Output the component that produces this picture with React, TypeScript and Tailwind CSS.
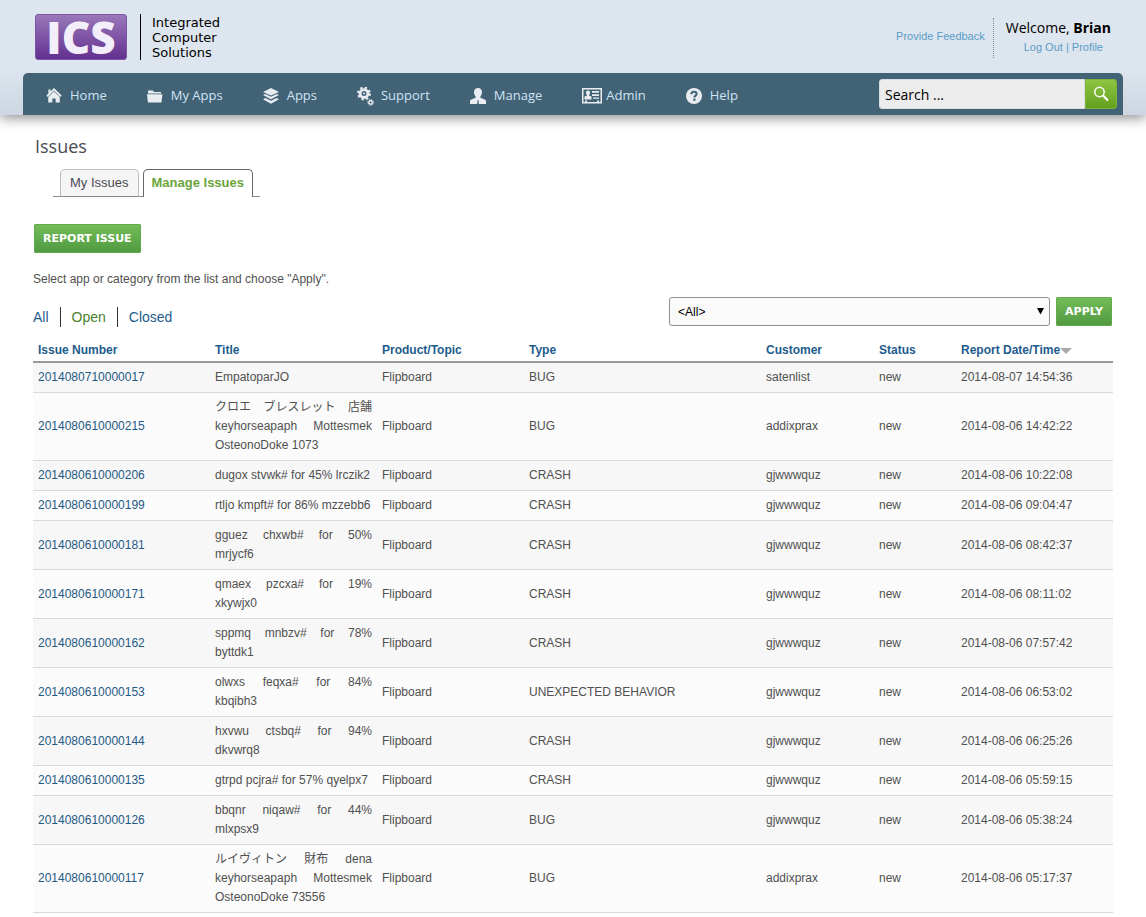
import type { ReactNode } from 'react';

type Issue = {
    id: string;
    title: string;
    type: string;
    customer: string;
    date: string;
};

const issues: Issue[] = [
    { id: '2014080710000017', title: 'EmpatoparJO', type: 'BUG', customer: 'satenlist', date: '2014-08-07 14:54:36' },
    { id: '2014080610000215', title: 'クロエ ブレスレット 店舗 keyhorseapaph Mottesmek OsteonoDoke 1073', type: 'BUG', customer: 'addixprax', date: '2014-08-06 14:42:22' },
    { id: '2014080610000206', title: 'dugox stvwk# for 45% lrczik2', type: 'CRASH', customer: 'gjwwwquz', date: '2014-08-06 10:22:08' },
    { id: '2014080610000199', title: 'rtljo kmpft# for 86% mzzebb6', type: 'CRASH', customer: 'gjwwwquz', date: '2014-08-06 09:04:47' },
    { id: '2014080610000181', title: 'gguez chxwb# for 50% mrjycf6', type: 'CRASH', customer: 'gjwwwquz', date: '2014-08-06 08:42:37' },
    { id: '2014080610000171', title: 'qmaex pzcxa# for 19% xkywjx0', type: 'CRASH', customer: 'gjwwwquz', date: '2014-08-06 08:11:02' },
    { id: '2014080610000162', title: 'sppmq mnbzv# for 78% byttdk1', type: 'CRASH', customer: 'gjwwwquz', date: '2014-08-06 07:57:42' },
    { id: '2014080610000153', title: 'olwxs feqxa# for 84% kbqibh3', type: 'UNEXPECTED BEHAVIOR', customer: 'gjwwwquz', date: '2014-08-06 06:53:02' },
    { id: '2014080610000144', title: 'hxvwu ctsbq# for 94% dkvwrq8', type: 'CRASH', customer: 'gjwwwquz', date: '2014-08-06 06:25:26' },
    { id: '2014080610000135', title: 'gtrpd pcjra# for 57% qyelpx7', type: 'CRASH', customer: 'gjwwwquz', date: '2014-08-06 05:59:15' },
    { id: '2014080610000126', title: 'bbqnr niqaw# for 44% mlxpsx9', type: 'BUG', customer: 'gjwwwquz', date: '2014-08-06 05:38:24' },
    { id: '2014080610000117', title: 'ルイヴィトン 財布 dena keyhorseapaph Mottesmek OsteonoDoke 73556', type: 'BUG', customer: 'addixprax', date: '2014-08-06 05:17:37' },
];

const columns = [
    { label: 'Issue Number', width: 'w-[177px]' },
    { label: 'Title', width: 'w-[167px]' },
    { label: 'Product/Topic', width: 'w-[147px]' },
    { label: 'Type', width: '' },
    { label: 'Customer', width: 'w-[113px]' },
    { label: 'Status', width: 'w-[82px]' },
    { label: 'Report Date/Time', width: 'w-[157px]' },
];

const HomeIcon = () => (
    <svg width="16" height="16" viewBox="0 0 16 16" fill="currentColor" aria-hidden="true">
        <path d="M8 0 15.6 7.6l-1.2 1.4L8 2.8 1.6 9 .4 7.6l2-2V1.4h2.2v2z" />
        <path d="M8 3.4 13.8 9V14.600H9.600v-4H6.400v4H2.200V9z" />
    </svg>
);

const FolderIcon = () => (
    <svg width="16" height="16" viewBox="0 0 16 16" fill="currentColor" aria-hidden="true">
        <path d="M1 5.4V2.6h5l1 1.3h7v1.5z" />
        <path d="M0 6.3h15.4l-.9 8.2H.9z" />
    </svg>
);

const LayersIcon = () => (
    <svg width="16" height="16" viewBox="0 0 16 16" fill="currentColor" aria-hidden="true">
        <path d="M8 0l8 3.9-8 3.7L0 3.9z" />
        <path d="M0 7l2.3-1L8 8.8 13.7 6 16 7l-8 4.3z" />
        <path d="M0 11.2l2.3-1.1L8 12.8l5.7-2.7 2.3 1.1L8 15.8z" />
    </svg>
);

const GearsIcon = () => (
    <svg width="18" height="20" viewBox="0 0 18 20" fill="none" stroke="currentColor" aria-hidden="true">
        <circle cx="7" cy="7.5" r="3.9" strokeWidth="2.8" />
        <circle cx="7" cy="7.5" r="5.8" strokeWidth="2.2" strokeDasharray="2.3 2.255" />
        <circle cx="7" cy="7.5" r="1" fill="currentColor" stroke="none" />
        <circle cx="13.6" cy="16.4" r="1.7" strokeWidth="1.4" />
        <circle cx="13.6" cy="16.4" r="2.7" strokeWidth="1.2" strokeDasharray="1.06 1.06" />
    </svg>
);

const PersonIcon = () => (
    <svg width="16" height="16" viewBox="0 0 16 16" fill="currentColor" aria-hidden="true">
        <path d="M8 0c2.6 0 4.1 1.8 4 4.3-.1 2.1-.9 3.4-1.6 4.2v1.2l4.3 1.7c1 .4 1.3 1.2 1.3 2.2V16H8.9l-.4-2.4.6-1.1H6.9l.6 1.1L7.1 16H0v-2.4c0-1 .3-1.8 1.3-2.2l4.3-1.7V8.5C4.9 7.7 4.1 6.4 4 4.3 3.9 1.8 5.4 0 8 0z" />
    </svg>
);

const BadgeIcon = () => (
    <svg width="20" height="16" viewBox="0 0 20 16" fill="currentColor" aria-hidden="true">
        <path fillRule="evenodd" d="M0 0h20v15.5H0zM1.5 1.5V14H3v-1.5h2V14h10v-1.5h2V14h1.5V1.5z" />
        <path d="M6 2.5c1.3 0 2 .9 2 2.2 0 1-.4 1.7-.8 2.1v1l2.300.8v2.9h-7V8.6l2.3-.8v-1C4.4 6.4 4 5.7 4 4.700c0-1.300.7-2.200 2-2.200z" />
        <path d="M10 3h7v1.8h-7zM10 6.2h7V8h-7zM11 9.4h6v1.4h-6z" />
    </svg>
);

const HelpIcon = () => (
    <svg width="16" height="16" viewBox="0 0 16 16" aria-hidden="true">
        <circle cx="8" cy="8" r="8" fill="currentColor" />
        <path d="M5.4 6.2c0-1.7 1.1-2.5 2.6-2.5s2.6.8 2.6 2.2c0 1.7-2.2 1.7-2.2 3.5" fill="none" stroke="#426276" strokeWidth="2.1" />
        <rect x="7.3" y="10.6" width="2.2" height="2.2" fill="#426276" />
    </svg>
);

const navItems: { label: string; icon: ReactNode }[] = [
    { label: 'Home', icon: <HomeIcon /> },
    { label: 'My Apps', icon: <FolderIcon /> },
    { label: 'Apps', icon: <LayersIcon /> },
    { label: 'Support', icon: <GearsIcon /> },
    { label: 'Manage', icon: <PersonIcon /> },
    { label: 'Admin', icon: <BadgeIcon /> },
    { label: 'Help', icon: <HelpIcon /> },
];

const greenButton =
    "h-[29px] px-2 rounded-[1px] border border-[#63a94f] bg-linear-to-b from-[#72bd58] to-[#519a42] font-['DejaVu_Sans',sans-serif] text-[11px] leading-4 font-bold text-white uppercase whitespace-nowrap";

const Header = () => (
    <header className="bg-linear-to-b from-[#dde5ee] from-60% to-[#cdd6e2] px-[23px] shadow-[0_3px_12px_rgba(0,0,0,0.45)]">
        <div className="flex h-[73px] items-start justify-between px-3">
            <a href="#" className="mt-[14px] flex h-[46px]">
                <span className="flex w-[92px] items-center justify-center rounded-[3px] border border-[#7d55a5] bg-linear-to-b from-[#9a78ba] to-[#632f8f] font-['Open_Sans',sans-serif] text-[44px] leading-none font-extrabold text-[#f3effa]">
                    ICS
                </span>
                <span className="ml-[13px] border-l border-black pl-[11px] pt-px font-['DejaVu_Sans',sans-serif] text-[13px] leading-[15px] text-black">
                    Integrated
                    <br />
                    Computer
                    <br />
                    Solutions
                </span>
            </a>
            <div className="mt-[18px] flex h-10 items-center text-[11px] text-[#5b9cc8]">
                <a href="#" className="pr-2 pb-1">Provide Feedback</a>
                <div className="flex h-10 flex-col items-end border-l border-dotted border-[#7d8894] pl-3">
                    <p className="font-['Open_Sans',sans-serif] text-sm text-black">
                        Welcome, <strong>Brian</strong>
                    </p>
                    <p className="pr-2 leading-[18px]">
                        <a href="#">Log Out</a> | <a href="#">Profile</a>
                    </p>
                </div>
            </div>
        </div>
        <div className="flex h-[42px] items-center justify-between rounded-t-[5px] bg-[#426276] pr-[6px] pl-[23px]">
            <nav className="flex gap-10 pt-[3px] font-['Open_Sans',sans-serif] text-[13px] text-[#cfe3f3]">
                {navItems.map((item) => (
                    <a key={item.label} href="#" className="flex items-center whitespace-nowrap">
                        <span className="w-6 text-[#e9edf1]">{item.icon}</span>
                        {item.label}
                    </a>
                ))}
            </nav>
            <form className="flex h-[30px]">
                <input
                    type="text"
                    aria-label="Search"
                    defaultValue="Search ..."
                    className="w-[206px] rounded-l-[3px] border border-[#d8dde0] bg-[#ececec] px-[5px] pt-[2px] font-['Open_Sans',sans-serif] text-sm text-black"
                />
                <button
                    type="button"
                    aria-label="Go"
                    className="flex w-8 items-center justify-center rounded-r-[3px] border border-[#7bb53a] bg-linear-to-b from-[#8fc541] to-[#62a01e] text-white"
                >
                    <svg width="16" height="16" viewBox="0 0 16 16" fill="none" stroke="currentColor" aria-hidden="true">
                        <circle cx="6.5" cy="6" r="4.7" strokeWidth="1.5" />
                        <path d="M10 9.5l5 5" strokeWidth="2.2" />
                    </svg>
                </button>
            </form>
        </div>
    </header>
);

const IssueTable = () => (
    <table className="mt-[10px] w-full table-fixed border-collapse text-left text-xs leading-[19px]">
        <thead>
            <tr className="border-b-2 border-[#999]">
                {columns.map((col, i) => (
                    <th key={col.label} scope="col" className={`${col.width} px-[5px] pt-1 pb-px font-bold whitespace-nowrap`}>
                        <a href="#" className="inline-flex items-center text-[#1d5c8c]">
                            {col.label}
                            {i === columns.length - 1 && (
                                <svg width="12" height="6" viewBox="0 0 12 6" fill="#aaa" aria-hidden="true">
                                    <path d="M0 0h12L6 6z" />
                                </svg>
                            )}
                        </a>
                    </th>
                ))}
            </tr>
        </thead>
        <tbody>
            {issues.map((issue) => (
                <tr key={issue.id} className="border-b border-[#d9d9d9] odd:bg-[#f7f7f7] even:bg-[#fbfbfb]">
                    <td className="p-[5px]">
                        <a href="#" className="text-[#1f5a85]">{issue.id}</a>
                    </td>
                    <td className="p-[5px] text-justify">
                        {/* keep each word whole so only the spaces stretch, also for kana */}
                        {issue.title.split(' ').map((word) => (
                            <span key={word}>
                                <span className="inline-block">{word}</span>{' '}
                            </span>
                        ))}
                    </td>
                    <td className="p-[5px]">Flipboard</td>
                    <td className="p-[5px]">{issue.type}</td>
                    <td className="p-[5px]">{issue.customer}</td>
                    <td className="p-[5px]">new</td>
                    <td className="p-[5px] whitespace-nowrap">{issue.date}</td>
                </tr>
            ))}
        </tbody>
    </table>
);

const App = () => {
    return (
        <div className="bg-white font-['Liberation_Sans','Noto_Sans_CJK_JP',sans-serif] text-[#505050]">
            <Header />
            <main className="px-[33px] pt-[17px] pb-1">
                <h1 className="pl-[2px] font-['Open_Sans',sans-serif] text-lg leading-7 text-[#4a4a52]">Issues</h1>

                <div className="mt-[9px] ml-5 flex h-7">
                    <span className="w-[7px] border-b border-[#8a8a8a]" />
                    <a href="#" className="rounded-t-[5px] border border-[#bdbdbd] border-b-[#8a8a8a] bg-[#f5f5f5] px-[9px] text-[13px] leading-[26px] text-[#4a4a52]">
                        My Issues
                    </a>
                    <span className="w-1 border-b border-[#8a8a8a]" />
                    <a href="#" className="rounded-t-[5px] border border-b-0 border-[#666] px-2 text-[13px] leading-[26px] font-bold text-[#6aa53a]">
                        Manage Issues
                    </a>
                    <span className="w-[7px] border-b border-[#8a8a8a]" />
                </div>

                <div className="mt-[27px] pl-px">
                    <button type="button" className={greenButton}>Report Issue</button>
                </div>

                <p className="mt-4 text-xs leading-5">Select app or category from the list and choose "Apply".</p>

                <div className="mt-2 flex items-start justify-between">
                    <div className="flex pt-[10px] text-sm leading-5 text-[#1d5c8c]">
                        <a href="#" className="pr-[11px]">All</a>
                        <a href="#" className="border-x border-[#333] px-[11px] text-[#4c7f2f]">Open</a>
                        <a href="#" className="pl-[11px]">Closed</a>
                    </div>
                    <form className="flex gap-[6px] pr-px">
                        <div className="relative">
                            <select
                                aria-label="App or category"
                                className="h-[29px] w-[381px] appearance-none rounded-[3px] border border-[#8f8f8f] bg-[#fafafa] px-2 text-xs text-black"
                            >
                                <option>&lt;All&gt;</option>
                            </select>
                            <svg className="pointer-events-none absolute top-[11px] right-[6px]" width="7" height="7" viewBox="0 0 7 7" aria-hidden="true">
                                <path d="M0 0h7L3.5 6.5z" />
                            </svg>
                        </div>
                        <button type="button" className={greenButton}>Apply</button>
                    </form>
                </div>

                <IssueTable />
            </main>
        </div>
    );
};

export default App;
